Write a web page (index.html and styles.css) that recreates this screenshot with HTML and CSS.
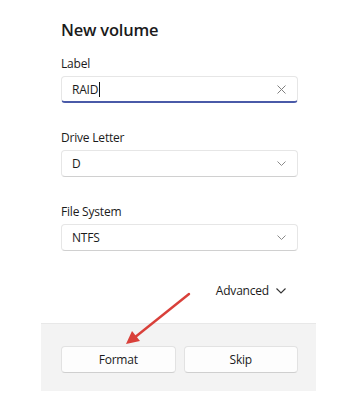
FILE: index.html
```html
<!DOCTYPE html>
<html lang="en">
<head>
    <meta charset="UTF-8">
    <meta name="viewport" content="width=device-width, initial-scale=1.0">
    <title>New volume</title>
    <link rel="stylesheet" href="styles.css">
</head>
<body>
    <div class="dialog">
        <div class="content">
            <h1>New volume</h1>

            <div class="field">
                <label class="field-label">Label</label>
                <div class="input active">
                    <span class="value">RAID<span class="caret"></span></span>
                    <svg class="icon" width="9" height="9" viewBox="0 0 9 9">
                        <path d="M0.5 0.5 L8.5 8.5 M8.5 0.5 L0.5 8.5" stroke="#808080" stroke-width="1" fill="none"/>
                    </svg>
                </div>
            </div>

            <div class="field">
                <label class="field-label">Drive Letter</label>
                <div class="input">
                    <span class="value">D</span>
                    <svg class="icon" width="9" height="5" viewBox="0 0 9 5">
                        <path d="M0.5 0.5 L4.5 4.5 L8.5 0.5" stroke="#8a8a8a" stroke-width="1" fill="none"/>
                    </svg>
                </div>
            </div>

            <div class="field">
                <label class="field-label">File System</label>
                <div class="input">
                    <span class="value">NTFS</span>
                    <svg class="icon" width="9" height="5" viewBox="0 0 9 5">
                        <path d="M0.5 0.5 L4.5 4.5 L8.5 0.5" stroke="#8a8a8a" stroke-width="1" fill="none"/>
                    </svg>
                </div>
            </div>

            <div class="advanced">
                <span>Advanced</span>
                <svg width="10" height="6" viewBox="0 0 10 6">
                    <path d="M0.5 0.5 L5 5 L9.5 0.5" stroke="#333" stroke-width="1.1" fill="none"/>
                </svg>
            </div>
        </div>

        <div class="footer">
            <button class="btn">Format</button>
            <button class="btn">Skip</button>
        </div>

        <!-- annotation arrow -->
        <svg class="arrow" width="80" height="60" viewBox="0 0 80 60">
            <path d="M68 2 L13 46" stroke="#d9403a" stroke-width="2.4" stroke-linecap="round" fill="none"/>
            <path d="M5 52 L11 39 L19 49 Z" fill="#d9403a"/>
        </svg>
    </div>
</body>
</html>
```

FILE: styles.css
```css
body {
    margin: 0;
    background: #fff;
    font-family: 'Open Sans', 'Noto Sans', sans-serif;
    color: #1b1b1b;
}

.dialog {
    position: relative;
    width: 275px;
    margin-left: 41px;
}

.content {
    padding: 18px 18px 24px 20px;
}

h1 {
    margin: 0 0 13px;
    font-size: 16.5px;
    font-weight: 600;
    line-height: 24px;
    letter-spacing: -0.2px;
}

.field {
    margin-bottom: 26px;
}

.field-label {
    display: block;
    font-size: 12px;
    line-height: 17px;
    letter-spacing: -0.2px;
    margin-bottom: 4px;
}

.input {
    display: flex;
    align-items: center;
    justify-content: space-between;
    height: 25px;
    padding: 0 11px 0 10px;
    background: #fff;
    border: 1px solid #e6e6e6;
    border-bottom-color: #d0d0d0;
    border-radius: 4px;
    font-size: 12px;
    letter-spacing: -0.2px;
}

.input.active {
    border-bottom: 2px solid #4a5aa8;
    height: 24px;
}

.value {
    display: flex;
    align-items: center;
}

.caret {
    display: inline-block;
    width: 1px;
    height: 15px;
    margin-left: 1px;
    background: #111;
}

.advanced {
    display: flex;
    justify-content: flex-end;
    align-items: center;
    gap: 7px;
    margin-top: 31px;
    padding-right: 12px;
    font-size: 12px;
    line-height: 17px;
    letter-spacing: -0.2px;
}

.footer {
    display: flex;
    gap: 8px;
    padding: 22px 18px 18px 20px;
    background: #f3f3f3;
    border-top: 1px solid #e8e8e8;
}

.btn {
    flex: 1;
    height: 27px;
    background: #fdfdfd;
    border: 1px solid #e2e2e2;
    border-bottom-color: #cfcfcf;
    border-radius: 4px;
    font-family: inherit;
    font-size: 12px;
    letter-spacing: -0.2px;
    color: #1b1b1b;
}

.arrow {
    position: absolute;
    left: 80px;
    top: 292px;
}
```
